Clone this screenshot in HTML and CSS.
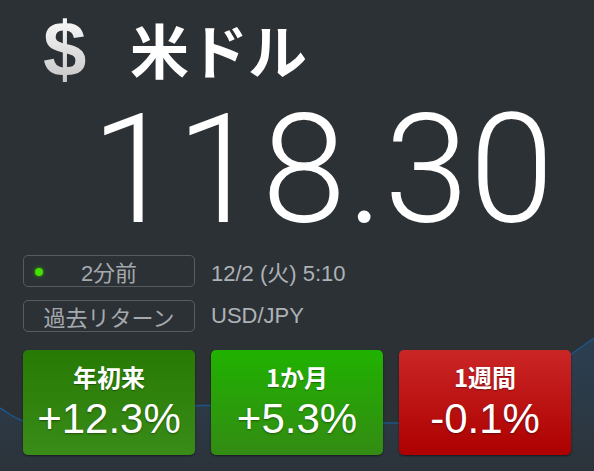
FILE: index.html
```html
<!DOCTYPE html>
<html lang="ja">
<head>
	<title>米ドル</title>
	<meta charset="UTF-8">
	<meta name="viewport" content="width=device-width, initial-scale=1">
	<link rel="stylesheet" href="styles.css">
</head>
<body>
	<div id="screen">
		<svg class="chart" width="594" height="471" viewBox="0 0 594 471">
			<defs>
				<linearGradient id="area" x1="0" y1="0" x2="0" y2="1">
					<stop offset="0" stop-color="#2a5a88" stop-opacity="0.35"/>
					<stop offset="1" stop-color="#2a5a88" stop-opacity="0.05"/>
				</linearGradient>
			</defs>
			<path d="M0,408 C10,414 16,420 30,423 L120,421 C150,414 180,407 200,405.5 L260,405 C290,410 320,422 340,423 L420,423 C460,410 520,390 560,362 L594,338 L594,471 L0,471 Z" fill="url(#area)"/>
			<path d="M0,408 C10,414 16,420 30,423 L120,421 C150,414 180,407 200,405.5 L260,405 C290,410 320,422 340,423 L420,423 C460,410 520,390 560,362 L594,338" fill="none" stroke="#1d5485" stroke-width="1.5"/>
		</svg>

		<div class="title">
			<span class="currency-sign">$</span>
			<span class="currency-name">米ドル</span>
		</div>

		<div class="rate">118.30</div>

		<div class="info">
			<div class="info-row">
				<div class="tag"><span class="live-dot"></span>2分前</div>
				<span class="info-text">12/2 (火) 5:10</span>
			</div>
			<div class="info-row">
				<div class="tag">過去リターン</div>
				<span class="info-text">USD/JPY</span>
			</div>
		</div>

		<div class="returns">
			<div class="tile tile-dark">
				<div class="tile-label">年初来</div>
				<div class="tile-value">+12.3%</div>
			</div>
			<div class="tile tile-bright">
				<div class="tile-label">1か月</div>
				<div class="tile-value">+5.3%</div>
			</div>
			<div class="tile tile-red">
				<div class="tile-label">1週間</div>
				<div class="tile-value">-0.1%</div>
			</div>
		</div>
	</div>
</body>
</html>
```

FILE: styles.css
```css
html, body{
	margin: 0;
	height: 100%;
}
body{
	background: #2c3136;
	font-family: "Liberation Sans", "Noto Sans CJK JP", sans-serif;
	color: #fff;
}
#screen{
	position: relative;
	width: 594px;
	height: 471px;
	overflow: hidden;
	padding: 0 23px;
	box-sizing: border-box;
}
.chart{
	position: absolute;
	left: 0;
	top: 0;
}
.title{
	position: relative;
	display: flex;
	align-items: center;
	height: 97px;
	padding-left: 20px;
}
.currency-sign{
	font-family: "Liberation Sans", sans-serif;
	font-weight: bold;
	font-size: 78px;
	line-height: 1;
	width: 87px;
	background: linear-gradient(#ffffff, #c2c2c2);
	-webkit-background-clip: text;
	background-clip: text;
	color: transparent;
}
.currency-name{
	font-family: "Noto Sans CJK JP", sans-serif;
	font-weight: bold;
	font-size: 59px;
	line-height: 1;
}
.rate{
	position: relative;
	height: 158px;
	padding-left: 68px;
	font-family: Roboto, "Liberation Sans", sans-serif;
	font-weight: 300;
	font-size: 152px;
	line-height: 146px;
	letter-spacing: 1px;
}
.info{
	position: relative;
	display: flex;
	flex-direction: column;
	gap: 13px;
}
.info-row{
	display: flex;
	align-items: center;
	gap: 16px;
}
.tag{
	position: relative;
	width: 172px;
	height: 32px;
	box-sizing: border-box;
	border: 1px solid #575c61;
	border-radius: 5px;
	display: flex;
	align-items: center;
	justify-content: center;
	font-size: 22px;
	color: #a4a9ad;
}
.live-dot{
	position: absolute;
	left: 11px;
	top: 12px;
	width: 8px;
	height: 8px;
	border-radius: 50%;
	background: #44e000;
	box-shadow: 0 0 4px #2fa800;
}
.info-text{
	font-size: 22px;
	color: #adb2b6;
}
.returns{
	position: relative;
	display: grid;
	grid-template-columns: repeat(3, 172px);
	gap: 16px;
	margin-top: 18px;
}
.tile{
	height: 105px;
	border-radius: 5px;
	box-sizing: border-box;
	display: flex;
	flex-direction: column;
	align-items: center;
	padding-top: 12px;
	box-shadow: 0 1px 2px rgba(0, 0, 0, 0.5);
}
.tile-dark{
	background: linear-gradient(#277a04, #3a8c18);
}
.tile-bright{
	background: linear-gradient(#20b200, #338b13);
}
.tile-red{
	background: linear-gradient(#cb2626, #ad0000);
}
.tile-label{
	font-family: "Noto Sans CJK JP", sans-serif;
	font-weight: bold;
	font-size: 24px;
	line-height: 30px;
	text-shadow: 0 1px 1px rgba(0, 0, 0, 0.35);
}
.tile-value{
	font-size: 42px;
	line-height: 48px;
	margin-top: 3px;
	text-shadow: 0 1px 2px rgba(0, 0, 0, 0.4);
}
```
